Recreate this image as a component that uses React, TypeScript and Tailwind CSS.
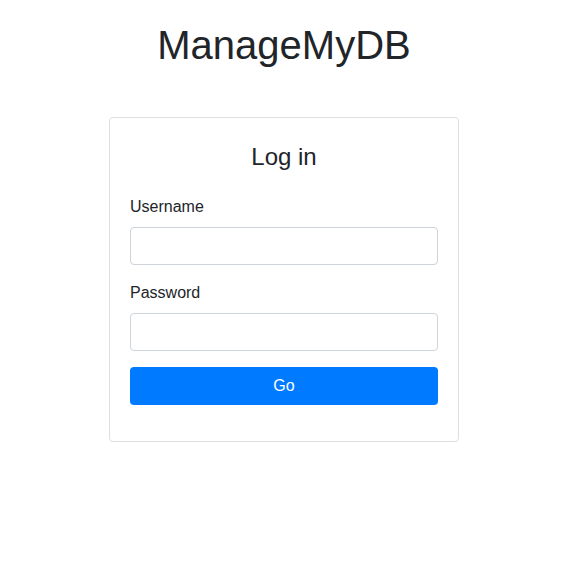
export default function App() {
  return (
    <div className="min-h-screen bg-white font-['Liberation_Sans',Arial,sans-serif] text-[#212529]">
      <div className="w-[568px] flex flex-col items-center">
        <h1 className="mt-[21px] text-[40px] leading-[48px] font-normal">ManageMyDB</h1>
        <div className="mt-[48px] w-[350px] rounded-[4px] border border-[#dfdfdf] p-5">
          <h4 className="mt-[4px] mb-[24px] text-center text-[24px] leading-[29px] font-normal">Log in</h4>
          <form onSubmit={(e) => e.preventDefault()}>
            <div className="mb-4">
              <label className="block mb-2 text-base leading-6">Username</label>
              <input type="text" className="block h-[38px] w-full rounded-[4px] border border-[#ced4da] px-3" />
            </div>
            <div className="mb-4">
              <label className="block mb-2 text-base leading-6">Password</label>
              <input type="password" className="block h-[38px] w-full rounded-[4px] border border-[#ced4da] px-3" />
            </div>
            <div className="mb-4">
              <button type="submit" className="block h-[38px] w-full rounded-[4px] bg-[#007bff] text-base text-white">
                Go
              </button>
            </div>
          </form>
        </div>
      </div>
    </div>
  );
}
